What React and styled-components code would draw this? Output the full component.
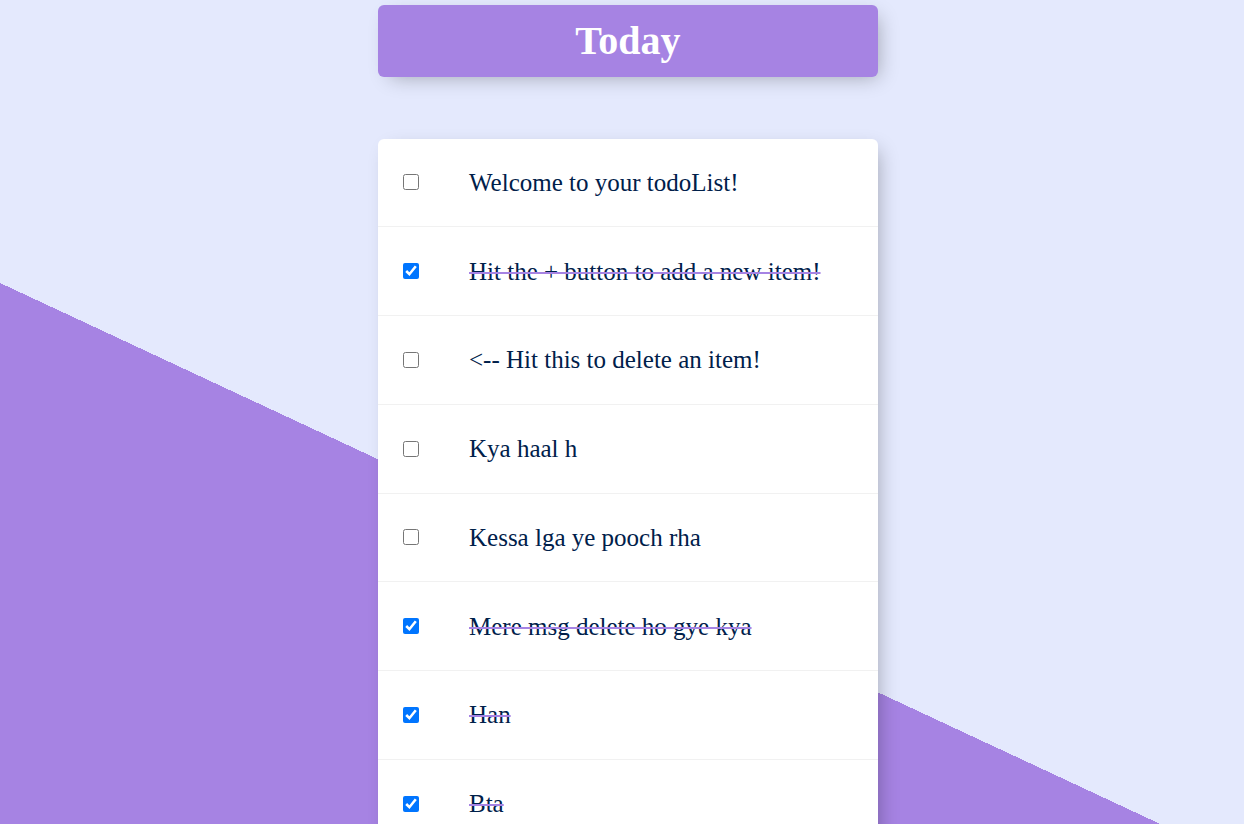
import { useState } from "react";
import styled, { createGlobalStyle } from "styled-components";

const initialItems = [
  { text: "Welcome to your todoList!", done: false },
  { text: "Hit the + button to add a new item!", done: true },
  { text: "<-- Hit this to delete an item!", done: false },
  { text: "Kya haal h", done: false },
  { text: "Kessa lga ye pooch rha", done: false },
  { text: "Mere msg delete ho gye kya", done: true },
  { text: "Han", done: true },
  { text: "Bta", done: true },
];

const GlobalStyle = createGlobalStyle`
  html, body {
    margin: 0;
    padding: 0;
    overflow: hidden;
  }
  body {
    font-family: "Liberation Serif", "Times New Roman", serif;
  }
`;

const Page = styled.div`
  height: 100vh;
  overflow: hidden;
  padding: 5px 0 0 12px;
  box-sizing: border-box;
  background-color: #e4e9fd;
  background-image: linear-gradient(25deg, #a683e3 50%, #e4e9fd 50%);
  background-size: 1244px 1146px;
  background-repeat: no-repeat;
`;

const Box = styled.div`
  width: 500px;
  margin: 0 auto;
  background: white;
  border-radius: 6px;
  box-shadow: 6px 6px 19px -6px rgba(0, 0, 0, 0.3);
`;

const Heading = styled(Box)`
  background-color: #a683e3;
  text-align: center;
`;

const Title = styled.h1`
  margin: 0;
  padding: 12.5px;
  font-size: 40px;
  font-weight: 700;
  line-height: 46px;
  height: 46px;
  box-sizing: content-box;
  padding-bottom: 13px;
  color: #fff;
`;

const List = styled(Box)`
  margin-top: 62px;
`;

const Item = styled.div`
  min-height: 87.75px;
  display: flex;
  align-items: center;
  border-bottom: 1px solid #f1f1f1;

  &:last-child {
    border-bottom: 0;
  }
`;

const Check = styled.input`
  width: 16px;
  height: 16px;
  margin: 25px;
  flex-shrink: 0;
`;

const Label = styled.p`
  margin: 0;
  padding: 25px;
  font-size: 25px;
  font-weight: 200;
  line-height: 29px;
  color: #00204a;
  text-decoration: ${(p) => (p.$done ? "line-through" : "none")};
  text-decoration-color: #a683e3;
  text-decoration-thickness: 2px;
`;

function App() {
  const [items, setItems] = useState(initialItems);

  const toggle = (idx) =>
    setItems((curr) =>
      curr.map((item, i) => (i === idx ? { ...item, done: !item.done } : item))
    );

  return (
    <Page>
      <GlobalStyle />
      <Heading>
        <Title>Today</Title>
      </Heading>
      <List>
        {items.map((item, idx) => (
          <Item key={idx}>
            <Check
              type="checkbox"
              checked={item.done}
              onChange={() => toggle(idx)}
            />
            <Label $done={item.done}>{item.text}</Label>
          </Item>
        ))}
      </List>
    </Page>
  );
}

export default App;
